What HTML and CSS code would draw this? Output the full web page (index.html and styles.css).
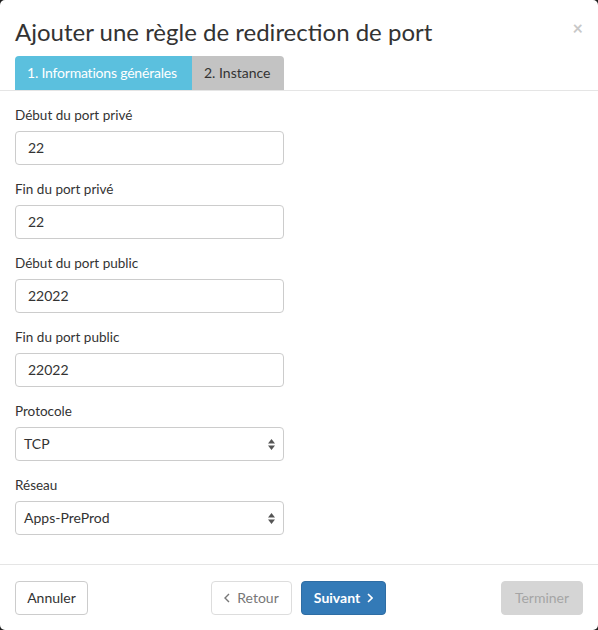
FILE: index.html
```html
<!DOCTYPE html>
<html lang="fr">
<head>
<meta charset="utf-8">
<link rel="stylesheet" href="styles.css">
</head>
<body>
<div class="modal">
  <div class="modal-header">
    <div class="title-row">
      <h4 class="title">Ajouter une règle de redirection de port</h4>
      <span class="close">×</span>
    </div>
    <div class="tabs">
      <div class="tab active">1. Informations générales</div>
      <div class="tab">2. Instance</div>
    </div>
  </div>
  <div class="modal-body">
    <div class="group">
      <label class="label">Début du port privé</label>
      <div class="input">22</div>
    </div>
    <div class="group">
      <label class="label">Fin du port privé</label>
      <div class="input">22</div>
    </div>
    <div class="group">
      <label class="label">Début du port public</label>
      <div class="input">22022</div>
    </div>
    <div class="group">
      <label class="label">Fin du port public</label>
      <div class="input">22022</div>
    </div>
    <div class="group">
      <label class="label">Protocole</label>
      <div class="input select">TCP<svg class="arrows" width="7" height="11" viewBox="0 0 7 11"><path d="M3.5 0L7 4.5H0z M3.5 11L0 6.5h7z" fill="#555"/></svg></div>
    </div>
    <div class="group">
      <label class="label">Réseau</label>
      <div class="input select">Apps-PreProd<svg class="arrows" width="7" height="11" viewBox="0 0 7 11"><path d="M3.5 0L7 4.5H0z M3.5 11L0 6.5h7z" fill="#555"/></svg></div>
    </div>
  </div>
  <div class="modal-footer">
    <button class="btn btn-cancel">Annuler</button>
    <div class="mid">
      <button class="btn btn-light"><svg class="chev" width="6" height="10" viewBox="0 0 6 10"><path d="M5 1L1 5l4 4" fill="none" stroke="currentColor" stroke-width="1.4"/></svg>Retour</button>
      <button class="btn btn-primary">Suivant<svg class="chev" width="6" height="10" viewBox="0 0 6 10"><path d="M1 1l4 4-4 4" fill="none" stroke="currentColor" stroke-width="1.6"/></svg></button>
    </div>
    <button class="btn btn-disabled">Terminer</button>
  </div>
</div>
</body>
</html>
```
FILE: styles.css
```css
* { box-sizing: border-box; }
html, body { margin: 0; padding: 0; }
body {
  background: #1e1e1e;
  font-family: Lato, "Liberation Sans", sans-serif;
  color: #333;
  width: 598px;
  height: 630px;
  overflow: hidden;
}
.modal {
  width: 598px;
  height: 630px;
  background: #fff;
  border-radius: 5px;
  display: flex;
  flex-direction: column;
}
.modal-header {
  padding: 17px 15px 0 15px;
  border-bottom: 1px solid #e5e5e5;
}
.title-row {
  display: flex;
  justify-content: space-between;
  align-items: flex-start;
}
.title {
  margin: 0;
  font-size: 24px;
  font-weight: 400;
  line-height: 30px;
  color: #333;
}
.close {
  font-size: 18px;
  line-height: 18px;
  color: #c8c8c8;
  margin-top: 2px;
  margin-right: 0;
  font-weight: 700;
}
.tabs {
  display: flex;
  margin-top: 9px;
}
.tab {
  height: 34px;
  line-height: 34px;
  padding: 0 12px 0 12px;
  width: 92px;
  font-size: 14px;
  background: #c3c3c3;
  color: #333;
  border-radius: 0 4px 0 0;
  white-space: nowrap;
}
.tab.active {
  background: #5bc0de;
  color: #fff;
  border-radius: 4px 0 0 0;
  width: 177px;
  padding: 0 0 0 12px;
  letter-spacing: -0.2px;
}
.modal-body {
  padding: 14px 15px 0 15px;
  flex: 1;
}
.group {
  margin-bottom: 14px;
}
.label {
  display: block;
  font-size: 13.5px;
  line-height: 20px;
  margin-bottom: 6px;
  color: #333;
}
.input {
  width: 269px;
  height: 34px;
  border: 1px solid #ccc;
  border-radius: 4px;
  padding: 0 12px;
  font-size: 14px;
  line-height: 32px;
  color: #333;
  display: flex;
  align-items: center;
  justify-content: space-between;
}
.select { padding: 0 8px 0 8px; }
.arrows { display: block; }
.modal-footer {
  border-top: 1px solid #e5e5e5;
  padding: 16px 15px 15px 15px;
  display: flex;
  align-items: center;
}
.mid {
  display: flex;
  gap: 9px;
  margin-left: 123px;
}
.btn {
  height: 34px;
  padding: 0;
  font-family: Lato, "Liberation Sans", sans-serif;
  font-size: 14px;
  border: 1px solid #ccc;
  border-radius: 4px;
  background: #fff;
  color: #333;
  line-height: 32px;
  display: flex;
  align-items: center;
  justify-content: center;
  gap: 7px;
}
.btn-cancel { width: 73px; }
.btn-light { color: #777; border-color: #ddd; width: 81px; }
.btn-primary {
  background: #337ab7;
  border-color: #2e6da4;
  color: #fff;
  font-weight: 700;
  width: 85px;
}
.btn-disabled {
  background: #d5d5d5;
  border-color: #d5d5d5;
  color: #a5a5a5;
  width: 82px;
  margin-left: auto;
}
.chev { display: block; }
```
